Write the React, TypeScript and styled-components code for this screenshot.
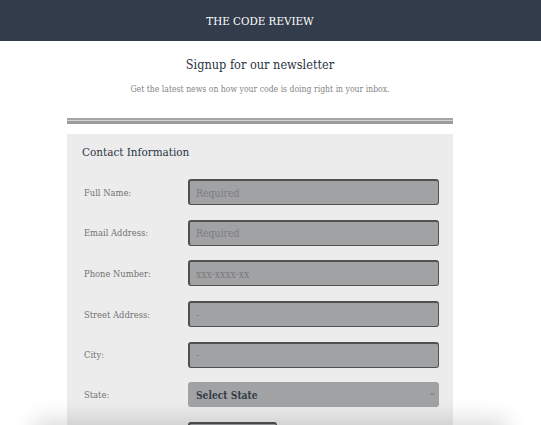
import React from "react";
import styled, { createGlobalStyle } from "styled-components";

const GlobalStyle = createGlobalStyle`
  html, body { margin: 0; padding: 0; background: #ffffff; }
  body {
    font-family: "DejaVu Serif Condensed", "DejaVu Serif", "Liberation Serif", serif;
    font-stretch: condensed;
    overflow: hidden;
  }
  * { box-sizing: border-box; }
`;

const Header = styled.header`
  height: 41px;
  background: #323c4b;
  display: flex;
`;

const HeaderInner = styled.div`
  width: 520px;
  display: flex;
  align-items: center;
  justify-content: center;
  color: #ffffff;
  font-size: 11.5px;
`;

const Page = styled.main`
  width: 520px;
  display: flex;
  flex-direction: column;
  align-items: center;
`;

const Heading = styled.h1`
  margin: 15px 0 0;
  font-size: 12.6px;
  font-weight: 400;
  color: #2b3444;
  line-height: 18px;
`;

const Subtitle = styled.p`
  margin: 9px 0 0;
  font-size: 8.6px;
  color: #858585;
  line-height: 12px;
`;

const Rule = styled.div`
  margin-top: 23px;
  width: 386px;
  height: 6px;
  background: linear-gradient(
    to bottom,
    #a6a6a6 0px,
    #a6a6a6 2px,
    #d2d2d2 2px,
    #d2d2d2 3px,
    #9c9c9c 3px,
    #9c9c9c 6px
  );
`;

const Card = styled.section`
  margin-top: 10px;
  width: 386px;
  background: #ececec;
  padding: 10px 14px 40px 15px;
`;

const CardTitle = styled.h2`
  margin: 0;
  font-size: 11.6px;
  font-weight: 400;
  color: #2b3444;
  line-height: 16px;
`;

const FormGrid = styled.div`
  margin-top: 19px;
  display: grid;
  grid-template-columns: 106px 1fr;
  row-gap: 14.7px;
  align-items: center;
`;

const Label = styled.label`
  padding-left: 2px;
  font-size: 9.3px;
  color: #727272;
`;

const Input = styled.input<{ $w?: number }>`
  width: ${(p) => (p.$w ? `${p.$w}px` : "100%")};
  height: 26px;
  margin: 0;
  background: #a1a2a4;
  border: 1px solid #505050;
  border-top-width: 2px;
  border-left-width: 2px;
  border-radius: 3px;
  padding: 0 6px;
  font-family: inherit;
  font-stretch: condensed;
  font-size: 10.4px;
  color: #333;
  outline: none;
  &::placeholder { color: #7c7c7c; }
`;

const SelectWrap = styled.div`
  position: relative;
  width: 100%;
`;

const Select = styled.select`
  width: 100%;
  height: 25px;
  margin: 0;
  display: block;
  appearance: none;
  -webkit-appearance: none;
  background: #a1a2a4;
  border: none;
  border-radius: 3px;
  padding: 0 8px;
  font-family: inherit;
  font-stretch: condensed;
  font-size: 10.2px;
  font-weight: 600;
  color: #333b48;
  outline: none;
`;

const Chevron = styled.svg`
  position: absolute;
  right: 4px;
  top: 10px;
  width: 5px;
  height: 4px;
  pointer-events: none;
`;

const BottomShade = styled.div`
  position: fixed;
  left: 40px;
  right: 40px;
  bottom: -30px;
  height: 30px;
  box-shadow: 0 0 22px 6px rgba(0, 0, 0, 0.14);
  pointer-events: none;
`;

const fields = [
  { label: "Full Name:", placeholder: "Required" },
  { label: "Email Address:", placeholder: "Required" },
  { label: "Phone Number:", placeholder: "xxx-xxxx-xx" },
  { label: "Street Address:", placeholder: "-" },
  { label: "City:", placeholder: "-" },
];

export default function App() {
  return (
    <>
      <GlobalStyle />
      <Header>
        <HeaderInner>THE CODE REVIEW</HeaderInner>
      </Header>
      <Page>
        <Heading>Signup for our newsletter</Heading>
        <Subtitle>Get the latest news on how your code is doing right in your inbox.</Subtitle>
        <Rule />
        <Card>
          <CardTitle>Contact Information</CardTitle>
          <FormGrid>
            {fields.map((f) => (
              <React.Fragment key={f.label}>
                <Label>{f.label}</Label>
                <Input placeholder={f.placeholder} />
              </React.Fragment>
            ))}
            <Label>State:</Label>
            <SelectWrap>
              <Select defaultValue="">
                <option value="">Select State</option>
              </Select>
              <Chevron viewBox="0 0 5 4">
                <path d="M0.5 0.8 L2.5 3 L4.5 0.8" fill="none" stroke="#6e6e6e" strokeWidth="0.9" />
              </Chevron>
            </SelectWrap>
            <Label>Zip Code:</Label>
            <Input $w={89} placeholder="" />
          </FormGrid>
        </Card>
      </Page>
      <BottomShade />
    </>
  );
}
